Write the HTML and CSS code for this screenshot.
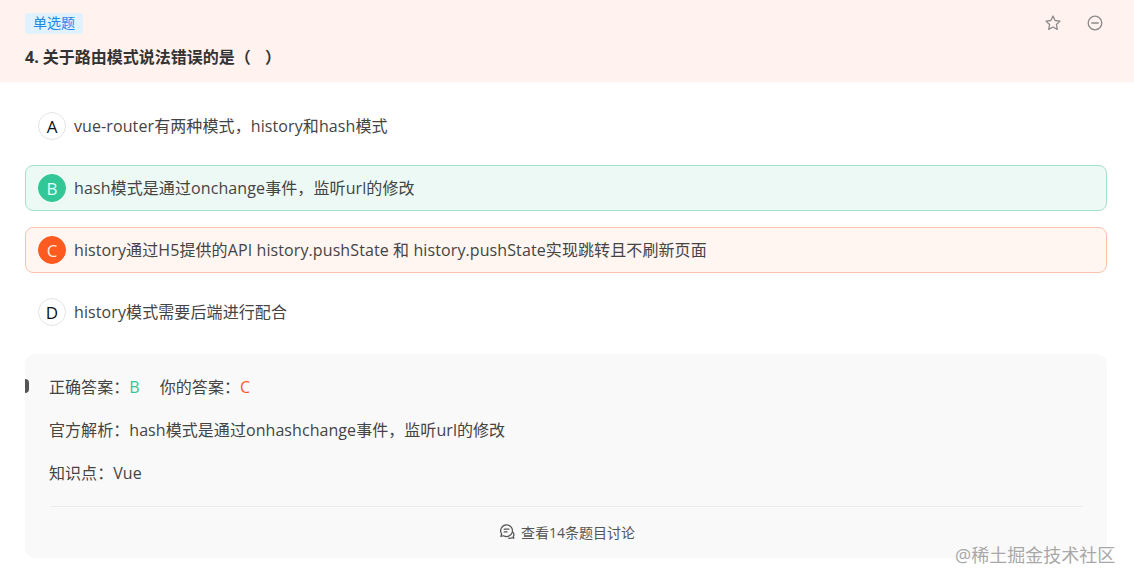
FILE: index.html
```html
<!DOCTYPE html>
<html lang="zh-CN">
<head>
<meta charset="utf-8">
<title>题目解析</title>
<link rel="stylesheet" href="styles.css">
</head>
<body>
<header class="head">
  <div class="head-top">
    <span class="tag">单选题</span>
    <div class="tools">
      <svg class="tool" viewBox="0 0 18 18" width="18" height="18"><path d="M9 2l2.1 4.5 4.9.6-3.6 3.4.9 4.9L9 13l-4.3 2.4.9-4.9L2 7.1l4.9-.6z" fill="none" stroke="#8c8a8a" stroke-width="1.3" stroke-linejoin="round"/></svg>
      <svg class="tool" viewBox="0 0 18 18" width="18" height="18"><circle cx="9" cy="9" r="6.8" fill="none" stroke="#8c8a8a" stroke-width="1.3"/><path d="M5.8 9h6.4" stroke="#8c8a8a" stroke-width="1.5" stroke-linecap="round"/></svg>
    </div>
  </div>
  <h1 class="title">4. 关于路由模式说法错误的是（<span class="blank"></span>）</h1>
</header>
<main class="main">
  <ul class="options">
    <li class="option"><span class="letter">A</span><span class="text">vue-router有两种模式，history和hash模式</span></li>
    <li class="option right"><span class="letter">B</span><span class="text">hash模式是通过onchange事件，监听url的修改</span></li>
    <li class="option wrong"><span class="letter">C</span><span class="text">history通过H5提供的API history.pushState 和 history.pushState实现跳转且不刷新页面</span></li>
    <li class="option"><span class="letter">D</span><span class="text">history模式需要后端进行配合</span></li>
  </ul>
  <section class="panel">
    <i class="notch"></i>
    <div class="rows">
      <p class="row">正确答案：<b class="ok">B</b><span class="mine">你的答案：</span><b class="bad">C</b></p>
      <p class="row">官方解析：hash模式是通过onhashchange事件，监听url的修改</p>
      <p class="row">知识点：Vue</p>
    </div>
    <div class="discuss">
      <svg viewBox="0 0 18 18" width="17" height="17"><path d="M8 2a6.2 6.2 0 0 0-5.2 9.6L2 14.2l2.8-.7A6.2 6.2 0 1 0 8 2z" fill="none" stroke="#555" stroke-width="1.3" stroke-linejoin="round"/><path d="M5.5 6.5h5M5.5 9.5h3" stroke="#555" stroke-width="1.3" stroke-linecap="round"/><path d="M14.5 9.5c1.4 1.5 1.5 3.6.6 5l.7 1.6-2.2-.5c-1.2.7-2.6.8-3.8.2" fill="none" stroke="#555" stroke-width="1.3" stroke-linejoin="round"/></svg>
      <span>查看14条题目讨论</span>
    </div>
  </section>
</main>
<div class="mark">@稀土掘金技术社区</div>
</body>
</html>
```

FILE: styles.css
```css
* { box-sizing: border-box; }
html, body { margin: 0; padding: 0; }
body {
  width: 1134px;
  height: 584px;
  overflow: hidden;
  position: relative;
  background: #fff;
  color: #333;
  font-family: "Open Sans", "Noto Sans CJK SC", sans-serif;
  font-size: 16px;
}
.head {
  height: 82px;
  background: #fff2ef;
  padding: 13px 30px 0 25px;
}
.head-top {
  display: flex;
  justify-content: space-between;
  align-items: flex-start;
  height: 21px;
}
.tag {
  width: 58px;
  height: 21px;
  background: #e0f1ff;
  color: #1e88e8;
  border-radius: 3px;
  font-size: 14px;
  line-height: 20px;
  text-align: center;
}
.tools { display: flex; gap: 24px; margin-top: 1px; }
.tool { display: block; }
.title {
  margin: 12px 0 0;
  font-size: 16px;
  font-weight: 700;
  line-height: 22px;
  color: #333;
}
.blank { display: inline-block; width: 14px; }
.main { padding: 21px 27px 0 25px; }
.options {
  list-style: none;
  margin: 0;
  padding: 0;
  display: flex;
  flex-direction: column;
  gap: 16px;
}
.option {
  height: 46px;
  display: flex;
  align-items: center;
  gap: 8px;
  padding: 0 12px;
  border: 1px solid transparent;
  border-radius: 8px;
  font-size: 16px;
  color: #444;
}
.text { margin-bottom: 2px; letter-spacing: .1px; }
.letter {
  width: 28px;
  height: 28px;
  flex: none;
  display: flex;
  align-items: center;
  justify-content: center;
  border: 1px solid #e4e4e8;
  border-radius: 50%;
  background: #fff;
  color: #111;
  font-size: 17px;
}
.right { background: #ecf9f5; border-color: #a5e0cc; }
.right .letter { background: #32c796; border-color: #32c796; color: #e6fff5; }
.wrong { background: #fff5f1; border-color: #f8c4ae; }
.wrong .letter { background: #ff5a1f; border-color: #ff5a1f; color: #ffe9df; }
.panel {
  position: relative;
  margin-top: 19px;
  height: 204px;
  background: #f9f9f9;
  border-radius: 10px;
  padding: 22px 24px 0;
}
.notch {
  position: absolute;
  left: 0;
  top: 25px;
  width: 4px;
  height: 14px;
  background: #555;
  border-radius: 0 7px 7px 0;
}
.rows { display: flex; flex-direction: column; gap: 21px; }
.row {
  margin: 0;
  font-size: 16px;
  line-height: 22px;
  color: #444;
  letter-spacing: .06px;
}
.row b { font-weight: 400; }
.ok { color: #32c796; }
.bad { color: #ff5a1f; }
.mine { margin-left: 20px; }
.discuss {
  margin: 22px 0 0 2px;
  width: 1032px;
  height: 50px;
  border-top: 1px solid #ebebeb;
  display: flex;
  align-items: center;
  justify-content: center;
  gap: 5px;
  font-size: 14px;
  color: #555;
}
.discuss svg { display: block; }
.mark {
  position: absolute;
  left: 955px;
  top: 543px;
  font-size: 18px;
  line-height: 24px;
  color: #a8a8a8;
  text-shadow: 1px 1px 1px rgba(255,255,255,.8);
  white-space: nowrap;
}
```
